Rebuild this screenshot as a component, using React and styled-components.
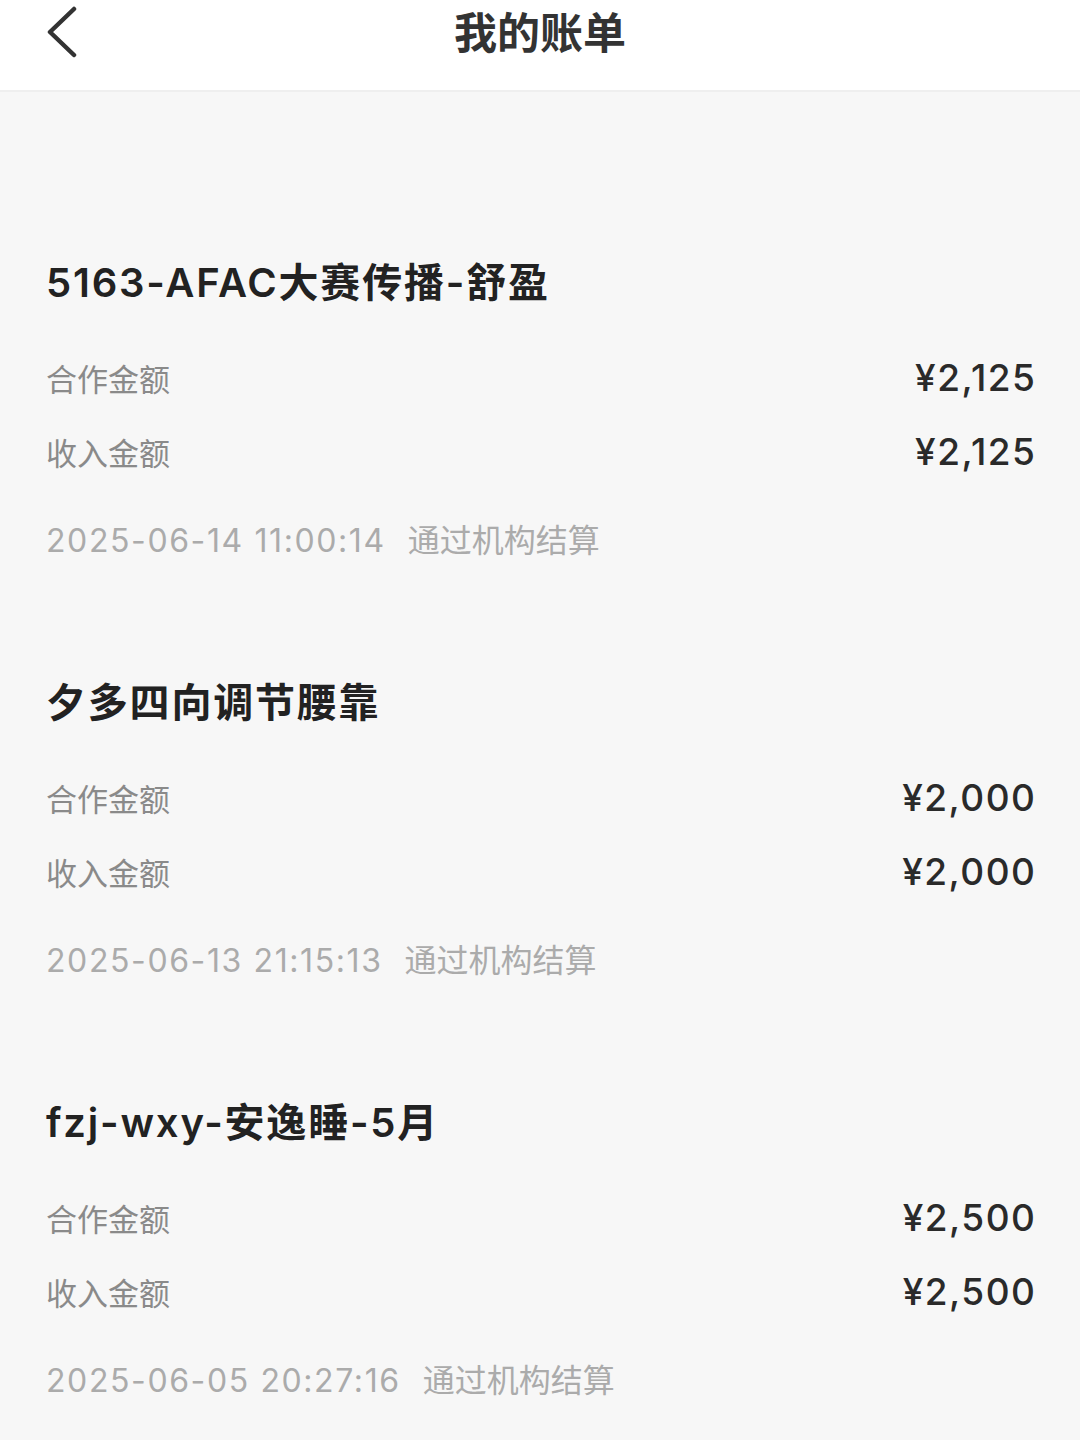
import React from 'react';
import styled, { createGlobalStyle } from 'styled-components';

const GlobalStyle = createGlobalStyle`
  body {
    margin: 0;
    background: #f7f7f7;
    font-family: Inter, "Noto Sans CJK SC", sans-serif;
  }
`

const Page = styled.div`
  width: 1080px;
  min-height: 1440px;
  background: #f7f7f7;
`

const Header = styled.div`
  height: 92px;
  box-sizing: border-box;
  background: #fff;
  border-bottom: 2px solid #efefef;
  display: grid;
  grid-template-columns: 120px 1fr 120px;
  align-items: start;
`

const BackButton = styled.div`
  padding: 6px 0 0 44px;
  height: 54px;
`

const Title = styled.div`
  text-align: center;
  font-size: 43px;
  font-weight: 700;
  line-height: 66px;
  color: #333;
`

const List = styled.div`
  padding: 163px 45px 0 46px;
  display: flex;
  flex-direction: column;
  gap: 109px;
`

const Card = styled.div`
  display: flex;
  flex-direction: column;
`

const CardTitle = styled.div`
  font-size: 40px;
  font-weight: 600;
  letter-spacing: 1.8px;
  line-height: 56px;
  color: #222;
  margin-bottom: 29px;
`

const Row = styled.div`
  display: flex;
  justify-content: space-between;
  align-items: center;
  height: 74px;
`

const Label = styled.span`
  font-size: 31px;
  color: #8a8a8a;
`

const Amount = styled.span`
  font-size: 37px;
  font-weight: 500;
  letter-spacing: 1.5px;
  margin-right: -1.5px;
  color: #2a2a2a;
`

const Meta = styled.div`
  margin-top: 28px;
  line-height: 50px;
  font-size: 32px;
  color: #ababab;
  display: flex;
  gap: 22px;
`

const Time = styled.span`
  letter-spacing: 1.6px;
`

const bills = [
  { name: '5163-AFAC大赛传播-舒盈', coop: '¥2,125', income: '¥2,125', time: '2025-06-14 11:00:14' },
  { name: '夕多四向调节腰靠', coop: '¥2,000', income: '¥2,000', time: '2025-06-13 21:15:13' },
  { name: 'fzj-wxy-安逸睡-5月', coop: '¥2,500', income: '¥2,500', time: '2025-06-05 20:27:16' },
]

const ChevronLeft = () => (
  <svg width="34" height="52" viewBox="0 0 34 52" fill="none">
    <path d="M30 3 L6 26 L30 49" stroke="#333" strokeWidth="4.5" strokeLinecap="round" strokeLinejoin="round" />
  </svg>
)

const App = () => (
  <Page>
    <GlobalStyle />
    <Header>
      <BackButton><ChevronLeft /></BackButton>
      <Title>我的账单</Title>
      <div />
    </Header>
    <List>
      {bills.map(bill => (
        <Card key={bill.time}>
          <CardTitle>{bill.name}</CardTitle>
          <Row>
            <Label>合作金额</Label>
            <Amount>{bill.coop}</Amount>
          </Row>
          <Row>
            <Label>收入金额</Label>
            <Amount>{bill.income}</Amount>
          </Row>
          <Meta>
            <Time>{bill.time}</Time>
            <span>通过机构结算</span>
          </Meta>
        </Card>
      ))}
    </List>
  </Page>
)

export default App;
